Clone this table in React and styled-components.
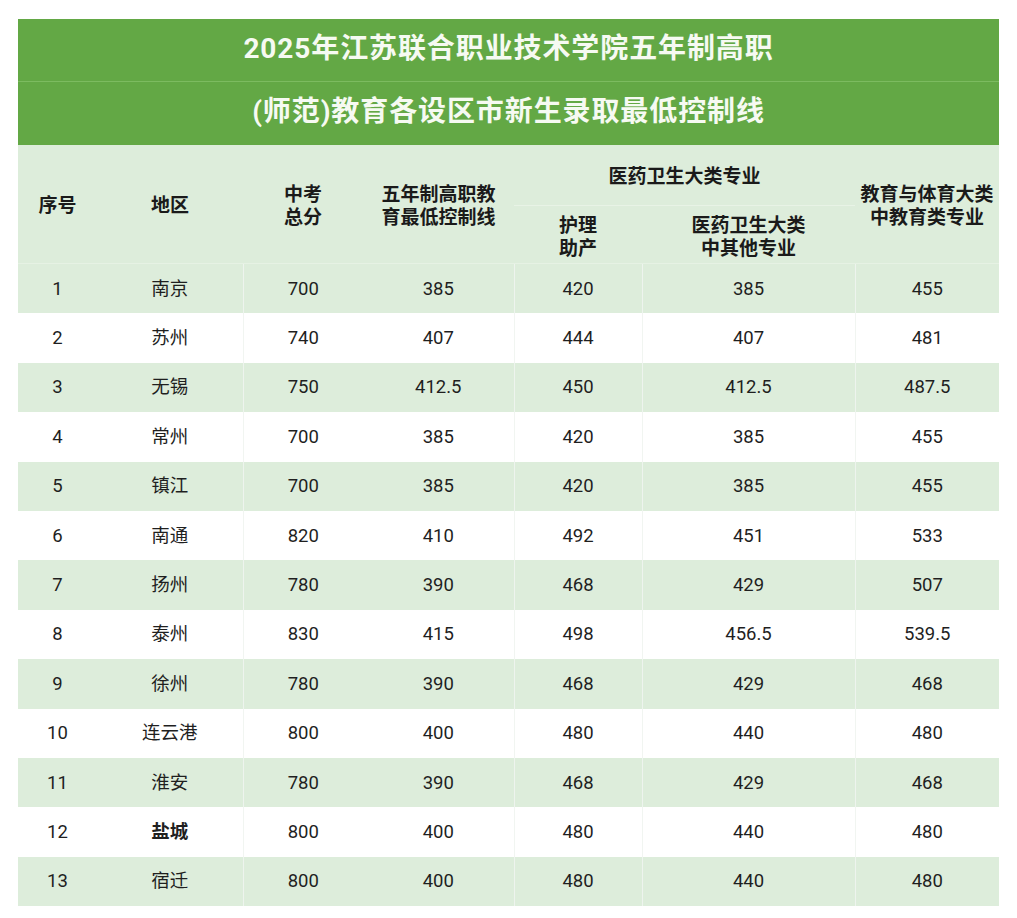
import React from 'react';
import styled, { createGlobalStyle } from 'styled-components';

const GlobalStyle = createGlobalStyle`
  html, body {
    margin: 0;
    padding: 0;
    background: #ffffff;
  }
  body {
    font-family: Roboto, "Noto Sans", "Noto Sans CJK SC", sans-serif;
    color: #1f1f1f;
  }
`;

const Page = styled.div`
  width: 1017px;
  padding: 19px 18px 0 18px;
  box-sizing: border-box;
`;

const Table = styled.table`
  width: 981px;
  border-collapse: collapse;
  table-layout: fixed;
`;

const TitleCell = styled.th`
  height: ${({ h, pb = 0 }) => h - pb}px;
  padding: 0 0 ${({ pb }) => pb || 0}px 0;
  background: #63a845;
  color: #f6faf2;
  font-family: Roboto, "Noto Sans CJK SC", sans-serif;
  font-size: 28px;
  font-weight: 700;
  line-height: 34px;
  letter-spacing: 0.9px;
  text-align: center;
  border-bottom: ${({ line }) => (line ? '1px solid #7cbb60' : 'none')};
`;

const HeadCell = styled.th`
  height: ${({ h }) => h}px;
  padding: 0;
  background: #ddeddb;
  font-family: "Noto Sans CJK SC", sans-serif;
  font-size: 19px;
  font-weight: 700;
  line-height: 24px;
  color: #1a1a1a;
  text-align: center;
  vertical-align: middle;
  border-bottom: 1px solid ${({ line }) => line || '#e6f2e4'};
`;

const HeadLine = styled.span`
  display: block;
  height: 23px;
  line-height: 23px;
  white-space: nowrap;
`;

const Row = styled.tr`
  background: ${({ shade }) => (shade ? '#ddeddb' : '#ffffff')};
`;

const Cell = styled.td`
  height: 49.4px;
  padding: 0;
  line-height: 22px;
  text-align: center;
  font-family: Roboto, "Noto Sans CJK SC", sans-serif;
  font-size: 18.5px;
  font-weight: ${({ bold }) => (bold ? 700 : 400)};
  color: #1f1f1f;
  border-right: ${({ divider }) => (divider ? '1px solid rgba(240, 244, 239, 0.9)' : 'none')};
`;

const cols = [79, 146, 120, 151, 128, 213, 144];
const dividers = [false, true, false, true, true, true, false];

const rows = [
  ['1', '南京', '700', '385', '420', '385', '455'],
  ['2', '苏州', '740', '407', '444', '407', '481'],
  ['3', '无锡', '750', '412.5', '450', '412.5', '487.5'],
  ['4', '常州', '700', '385', '420', '385', '455'],
  ['5', '镇江', '700', '385', '420', '385', '455'],
  ['6', '南通', '820', '410', '492', '451', '533'],
  ['7', '扬州', '780', '390', '468', '429', '507'],
  ['8', '泰州', '830', '415', '498', '456.5', '539.5'],
  ['9', '徐州', '780', '390', '468', '429', '468'],
  ['10', '连云港', '800', '400', '480', '440', '480'],
  ['11', '淮安', '780', '390', '468', '429', '468'],
  ['12', '盐城', '800', '400', '480', '440', '480'],
  ['13', '宿迁', '800', '400', '480', '440', '480'],
];

const Lines = ({ children }) =>
  children.map((t) => <HeadLine key={t}>{t}</HeadLine>);

export default function App() {
  return (
    <Page>
      <GlobalStyle />
      <Table>
        <colgroup>
          {cols.map((w, i) => (
            <col key={i} style={{ width: w }} />
          ))}
        </colgroup>
        <thead>
          <tr>
            <TitleCell colSpan={7} h={62} pb={3} line>
              2025年江苏联合职业技术学院五年制高职
            </TitleCell>
          </tr>
          <tr>
            <TitleCell colSpan={7} h={63} pb={4}>
              (师范)教育各设区市新生录取最低控制线
            </TitleCell>
          </tr>
          <tr>
            <HeadCell rowSpan={2}>序号</HeadCell>
            <HeadCell rowSpan={2}>地区</HeadCell>
            <HeadCell rowSpan={2}>
              <Lines>{['中考', '总分']}</Lines>
            </HeadCell>
            <HeadCell rowSpan={2}>
              <Lines>{['五年制高职教', '育最低控制线']}</Lines>
            </HeadCell>
            <HeadCell colSpan={2} h={60} line="#e8f3e6">
              医药卫生大类专业
            </HeadCell>
            <HeadCell rowSpan={2}>
              <Lines>{['教育与体育大类', '中教育类专业']}</Lines>
            </HeadCell>
          </tr>
          <tr>
            <HeadCell h={57}>
              <Lines>{['护理', '助产']}</Lines>
            </HeadCell>
            <HeadCell h={57}>
              <Lines>{['医药卫生大类', '中其他专业']}</Lines>
            </HeadCell>
          </tr>
        </thead>
        <tbody>
          {rows.map((r, i) => (
            <Row key={r[0]} shade={i % 2 === 0}>
              {r.map((v, j) => (
                <Cell key={j} divider={dividers[j]} bold={r[0] === '12' && j === 1}>
                  {v}
                </Cell>
              ))}
            </Row>
          ))}
        </tbody>
      </Table>
    </Page>
  );
}
